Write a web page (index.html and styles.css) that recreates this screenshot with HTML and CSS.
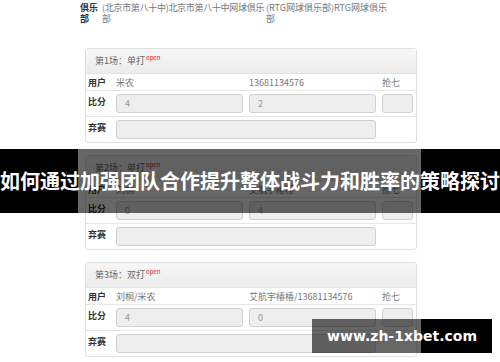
FILE: index.html
```html
<!DOCTYPE html>
<html lang="zh-CN">
<head>
  <meta charset="UTF-8">
  <meta name="viewport" content="width=device-width, initial-scale=1.0">
  <title>如何通过加强团队合作提升整体战斗力和胜率的策略探讨</title>
  <link rel="stylesheet" href="styles.css">
</head>
<body>
  <div class="page">
    <div class="club">
      <div class="club-label">俱乐部</div>
      <div class="club-a">(北京市第八十中)北京市第八十中网球俱乐部</div>
      <div class="club-b">(RTG网球俱乐部)RTG网球俱乐部</div>
    </div>

    <div class="match">
      <div class="match-head">第1场：单打<sup class="open">open</sup></div>
      <div class="row row-user">
        <div class="label">用户</div>
        <div class="val">米农</div>
        <div class="val">13681134576</div>
        <div class="val">抢七</div>
      </div>
      <div class="row">
        <div class="label">比分</div>
        <div class="box">4</div>
        <div class="box">2</div>
        <div class="box"></div>
      </div>
      <div class="row">
        <div class="label">弃赛</div>
        <div class="box wide"></div>
      </div>
    </div>

    <div class="match">
      <div class="match-head">第2场：单打<sup class="open">open</sup></div>
      <div class="row row-user">
        <div class="label">用户</div>
        <div class="val">刘桐</div>
        <div class="val">艾航宇椿椿</div>
        <div class="val">抢七</div>
      </div>
      <div class="row">
        <div class="label">比分</div>
        <div class="box">0</div>
        <div class="box">4</div>
        <div class="box"></div>
      </div>
      <div class="row">
        <div class="label">弃赛</div>
        <div class="box wide"></div>
      </div>
    </div>

    <div class="match">
      <div class="match-head">第3场：双打<sup class="open">open</sup></div>
      <div class="row row-user">
        <div class="label">用户</div>
        <div class="val">刘桐/米农</div>
        <div class="val">艾航宇椿椿/13681134576</div>
        <div class="val">抢七</div>
      </div>
      <div class="row">
        <div class="label">比分</div>
        <div class="box">4</div>
        <div class="box">0</div>
        <div class="box"></div>
      </div>
      <div class="row">
        <div class="label">弃赛</div>
        <div class="box wide"></div>
      </div>
    </div>
  </div>

  <div class="title-band">如何通过加强团队合作提升整体战斗力和胜率的策略探讨</div>
  <div class="watermark">www.zh-1xbet.com</div>
</body>
</html>
```

FILE: styles.css
```css
body {
  margin: 0;
  width: 500px;
  height: 362px;
  overflow: hidden;
  background: #fff;
  font-family: "Noto Sans CJK SC", "Liberation Sans", sans-serif;
  color: #777;
  position: relative;
}
.page {
  width: 343px;
  margin-left: 78px;
}
.club {
  display: flex;
  font-size: 9px;
  line-height: 11px;
  padding-top: 2px;
  height: 46px;
}
.club-label {
  width: 20px;
  margin-left: 2px;
  font-weight: bold;
  color: #333;
}
.club-a {
  width: 164px;
  margin-left: 2px;
  letter-spacing: -0.3px;
}
.club-b {
  width: 124px;
}
.match {
  margin-left: 7px;
  width: 330px;
  border: 1px solid #e0e0e0;
  border-radius: 3px;
  margin-bottom: 12px;
  background: #fff;
}
.match-head {
  height: 24px;
  line-height: 24px;
  padding-left: 9px;
  font-size: 9px;
  color: #666;
  background: linear-gradient(#f7f7f7, #ececec);
  border-bottom: 1px solid #e2e2e2;
}
.open {
  color: #e02020;
  font-size: 6px;
  line-height: 0;
  vertical-align: 4px;
  margin-left: 1px;
}
.row {
  display: grid;
  grid-template-columns: 27px 133px 133px 1fr;
  height: 25px;
  border-top: 1px solid #e6e6e6;
  font-size: 9px;
}
.row-user {
  height: 16px;
  border-top: none;
  align-items: center;
}
.label {
  padding-left: 2px;
  padding-top: 4px;
  font-weight: bold;
  color: #333;
}
.row-user .label {
  padding-top: 0;
}
.val {
  padding-left: 3px;
  color: #777;
}
.box {
  margin: 3px;
  height: 17px;
  line-height: 17px;
  padding-left: 8px;
  background: #eeeeee;
  border: 1px solid #d0d0d0;
  border-radius: 3px;
  color: #999;
}
.box.wide {
  grid-column: 2 / 4;
}
.title-band {
  position: absolute;
  left: 0;
  top: 149px;
  width: 500px;
  height: 64px;
  line-height: 64px;
  background: linear-gradient(to right, #000 78px, rgba(0, 0, 0, 0.6) 78px, rgba(0, 0, 0, 0.6) 421px, #000 421px);
  color: #fff;
  font-size: 20px;
  font-weight: bold;
  text-align: center;
  white-space: nowrap;
}
.watermark {
  position: absolute;
  left: 312px;
  top: 319px;
  width: 180px;
  height: 34px;
  line-height: 34px;
  background: linear-gradient(to right, rgba(0, 0, 0, 0.6) 109px, #000 109px);
  color: #fff;
  font-family: "DejaVu Sans", sans-serif;
  font-size: 14px;
  font-weight: bold;
  text-align: center;
}
```
